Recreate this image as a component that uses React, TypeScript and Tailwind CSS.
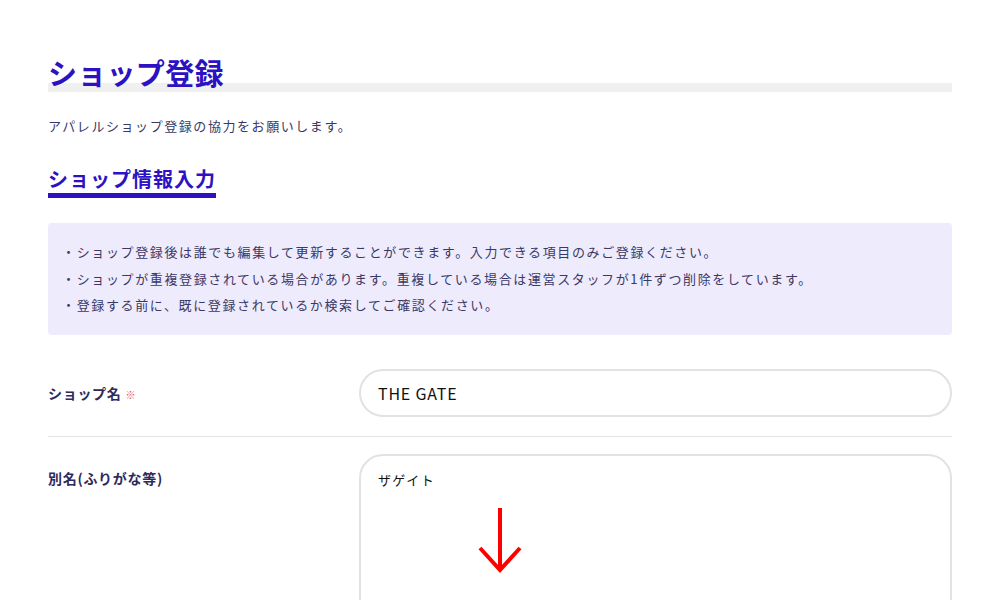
import React from "react"

const notes = [
  "・ショップ登録後は誰でも編集して更新することができます。入力できる項目のみご登録ください。",
  "・ショップが重複登録されている場合があります。重複している場合は運営スタッフが1件ずつ削除をしています。",
  "・登録する前に、既に登録されているか検索してご確認ください。",
]

export default function App() {
  return (
    <div className="min-h-[600px] bg-white px-12 pt-[52px] font-['Noto_Sans_CJK_JP','Noto_Sans',sans-serif] text-[#3b3864]">
      <h1 className="bg-[linear-gradient(transparent_31px,#f0f0f0_31px)] text-[29px] font-bold leading-[40px] tracking-[0.01em] text-[#2c12c2]">
        ショップ登録
      </h1>

      <p className="mt-6 text-[13px] leading-5 tracking-[0.12em]">
        アパレルショップ登録の協力をお願いします。
      </p>

      <h2 className="mt-[29px] inline-block border-b-[5px] border-[#2c12c2] text-[20px] font-bold leading-[28px] tracking-[0.05em] text-[#2c12c2]">
        ショップ情報入力
      </h2>

      <div className="mt-[25px] rounded bg-[#eeebfd] px-[14px] py-4">
        {notes.map((n) => (
          <p key={n} className="text-[13px] leading-[26.5px] tracking-[0.125em]">
            {n}
          </p>
        ))}
      </div>

      <div className="mt-[34px] grid grid-cols-[311px_1fr] border-b border-[#e4e4e4] pb-[19px]">
        <label className="pt-[15px] text-[14px] font-bold leading-[18px] tracking-[0.05em] text-[#2e2a5e]">
          ショップ名 <span className="text-[10px] font-normal text-[#e0505a]">※</span>
        </label>
        <input
          readOnly
          value="THE GATE"
          className="h-12 rounded-full border-2 border-[#e2e2e2] bg-white px-[17px] font-['Noto_Sans_CJK_JP','Noto_Sans',sans-serif] text-[16px] tracking-[0.05em] text-[#111] outline-none"
        />
      </div>

      <div className="grid grid-cols-[311px_1fr] pt-[17px]">
        <label className="pt-[15px] text-[14px] font-bold leading-[18px] tracking-[0.05em] text-[#2e2a5e]">
          別名(ふりがな等)
        </label>
        <div className="relative">
          <textarea
            readOnly
            defaultValue="ザゲイト"
            className="h-[200px] w-full resize-none rounded-[24px] border-2 border-[#e2e2e2] bg-white px-[17px] pt-[15px] font-['Noto_Sans_CJK_JP',sans-serif] text-[13px] leading-[18px] tracking-[0.1em] text-[#111] outline-none"
          />
          <svg
            className="absolute left-[119px] top-[54px]"
            width="44"
            height="66"
            viewBox="0 0 44 66"
            fill="none"
            stroke="#ff0000"
            strokeWidth="4"
          >
            <line x1="22" y1="0" x2="22" y2="62" />
            <polyline points="2,40 22,62 42,40" />
          </svg>
        </div>
      </div>
    </div>
  )
}
